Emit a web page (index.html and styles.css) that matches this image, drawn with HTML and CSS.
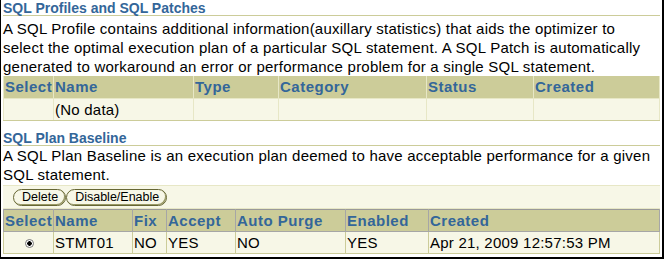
FILE: index.html
```html
<!DOCTYPE html>
<html lang="en">
<head>
  <meta charset="UTF-8">
  <title>SQL Profiles and Plan Baselines</title>
  <link rel="stylesheet" href="styles.css">
</head>
<body>
  <div class="frame">
    <!-- SQL Profiles -->
    <h2 class="section-title">SQL Profiles and SQL Patches</h2>
    <p class="info first">A SQL Profile contains additional information(auxillary statistics) that aids the optimizer to select the optimal execution plan of a particular SQL statement. A SQL Patch is automatically generated to workaround an error or performance problem for a single SQL statement.</p>
    <table class="grid grid-light">
      <colgroup>
        <col style="width:50px"><col style="width:140px"><col style="width:85px"><col style="width:148px"><col style="width:107px"><col>
      </colgroup>
      <tr>
        <th>Select</th><th>Name</th><th>Type</th><th>Category</th><th>Status</th><th>Created</th>
      </tr>
      <tr>
        <td></td><td>(No data)</td><td></td><td></td><td></td><td></td>
      </tr>
    </table>

    <!-- SQL Plan Baseline -->
    <h2 class="section-title second">SQL Plan Baseline</h2>
    <p class="info">A SQL Plan Baseline is an execution plan deemed to have acceptable performance for a given SQL statement.</p>
    <div class="toolbar">
      <button class="pill">Delete</button><button class="pill">Disable/Enable</button>
    </div>
    <table class="grid grid-dark">
      <colgroup>
        <col style="width:50px"><col style="width:79px"><col style="width:34px"><col style="width:69px"><col style="width:110px"><col style="width:83px"><col>
      </colgroup>
      <tr>
        <th>Select</th><th>Name</th><th>Fix</th><th>Accept</th><th>Auto Purge</th><th>Enabled</th><th>Created</th>
      </tr>
      <tr>
        <td class="center"><span class="radio"></span></td><td>STMT01</td><td>NO</td><td>YES</td><td>NO</td><td>YES</td><td>Apr 21, 2009 12:57:53 PM</td>
      </tr>
    </table>
  </div>
</body>
</html>
```

FILE: styles.css
```css
body {
  margin: 0;
  background: #fff;
  font-family: "Liberation Sans", Arial, sans-serif;
}

.frame {
  box-sizing: border-box;
  width: 664px;
  height: 259px;
  padding: 0 2px;
  border-left: 1px solid #000;
  border-right: 2px solid #000;
  border-bottom: 2px solid #000;
  overflow: hidden;
}

.section-title {
  margin: 0;
  height: 15px;
  font-size: 14px;
  line-height: 16px;
  font-weight: bold;
  color: #336699;
  border-bottom: 1px solid #cccc99;
}

.section-title.second {
  margin-top: 9px;
}

.info {
  margin: 0;
  font-size: 15px;
  line-height: 19px;
  letter-spacing: 0.23px;
  color: #000;
}

.info.first {
  padding-top: 3px;
}

.grid {
  width: 657px;
  border-collapse: collapse;
  table-layout: fixed;
  font-size: 15px;
  letter-spacing: 0.23px;
}

.grid tr {
  height: 22px;
}

.grid th {
  padding: 0 0 0 1px;
  text-align: left;
  font-size: 15px;
  letter-spacing: 0.5px;
  font-weight: bold;
  color: #336699;
  background: #cccc99;
  white-space: nowrap;
}

.grid td {
  padding: 0 0 0 1px;
  background: #f7f7e7;
  color: #000;
  white-space: nowrap;
}

.grid-light th,
.grid-light td {
  border: 1px solid #e7e7c6;
  border-top: none;
}

.grid-light tr:last-child td {
  border-bottom: 1px solid #cccc99;
}

.grid-dark {
  border: 1px solid #999;
}

.grid-dark th,
.grid-dark td {
  border: 1px solid #a6a6a6;
  border-top: none;
}

.grid-dark td {
  border-color: #cccc99;
}

.center {
  text-align: center;
}

.radio {
  display: inline-block;
  width: 7px;
  height: 7px;
  border: 1px solid #777;
  border-radius: 50%;
  background: radial-gradient(circle, #000 0 2px, #fff 2.5px);
  vertical-align: middle;
}

.toolbar {
  margin-top: 1px;
  height: 24px;
  padding: 3px 0 0 10px;
  box-sizing: border-box;
  background: #f7f7e7;
  border-top: 1px solid #e7e7c6;
  border-bottom: 1px solid #e7e7c6;
  display: flex;
  align-items: flex-start;
}

.pill {
  height: 17px;
  padding: 0 7px 0 8px;
  margin: 0;
  font-family: "Liberation Sans", Arial, sans-serif;
  font-size: 12.5px;
  line-height: 15px;
  color: #000;
  background: #f7f7e7;
  border: 1px solid #666633;
  border-radius: 9px;
  box-shadow: inset -1px -1px 0 #999966;
}
```
